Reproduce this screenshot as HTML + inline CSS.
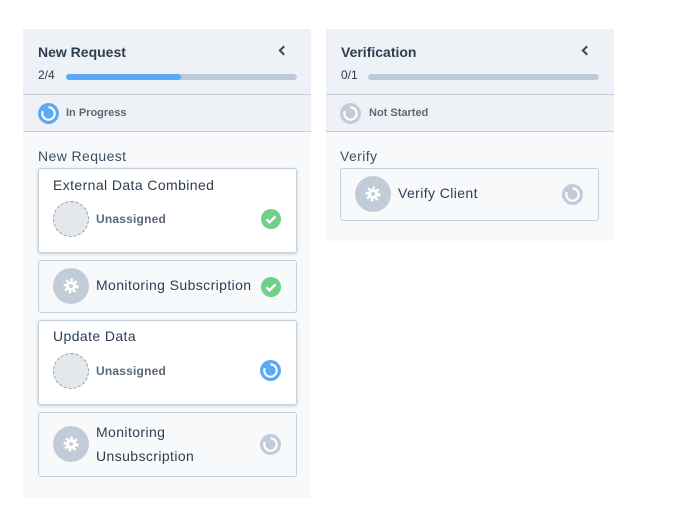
<!DOCTYPE html>
<html><head><style>
*{box-sizing:border-box;margin:0;padding:0}
body{width:673px;height:511px;background:#fff;font-family:"Liberation Sans",sans-serif;color:#2d3e50;position:relative;overflow:hidden}
.col{position:absolute;background:#f7f9fb;width:288px}
.hd{position:absolute;left:0;top:0;width:288px;height:66px;background:#eef2f6;border-bottom:1px solid #c5d0db}
.st{position:absolute;left:0;top:66px;width:288px;height:37px;background:#eef2f6;border-bottom:1px solid #c5d0db}
.a{position:absolute;white-space:nowrap}
.t{font-size:14px;letter-spacing:0.4px}
.card{position:absolute;left:15px;width:259px;border:1px solid #c5d0db;border-radius:3px;background:#f7f9fb}
.card.w{background:#fff;box-shadow:0 1px 3px rgba(0,0,0,.2)}
.av{position:absolute;width:36px;height:36px;border-radius:50%;background:#e4e8ec;border:1.5px dashed #8e9cae}
.gear{position:absolute;width:36px;height:36px;border-radius:50%;background:#c2ccd8}
.chev{position:absolute;left:257px;top:18px;width:7px;height:7px;border-left:2px solid #444;border-bottom:2px solid #444;transform:rotate(45deg)}
</style></head><body>
<svg width="0" height="0" style="position:absolute"><defs>
<symbol id="g" viewBox="0 0 36 36"><circle cx="18" cy="18" r="5.5" fill="none" stroke="#fff" stroke-width="4" stroke-dasharray="2.2 2"/><circle cx="18" cy="18" r="5" fill="#fff"/><circle cx="18" cy="18" r="2" fill="#c2ccd8"/></symbol>
<symbol id="ok" viewBox="0 0 20 20"><circle cx="10" cy="10" r="10" fill="#6fd08a"/><path d="M5.5 10.3l3 3 6-6" fill="none" stroke="#fff" stroke-width="2.4"/></symbol>
<symbol id="pb" viewBox="0 0 22 22"><circle cx="11" cy="11" r="11" fill="#5aa9f5"/><circle cx="11" cy="11" r="6.5" fill="none" stroke="#fff" stroke-width="2.2"/><path d="M11 4.5A6.5 6.5 0 0 0 5 8.5" fill="none" stroke="#5aa9f5" stroke-width="3"/></symbol>
<symbol id="pg" viewBox="0 0 22 22"><circle cx="11" cy="11" r="11" fill="#c2ccd8"/><circle cx="11" cy="11" r="6.5" fill="none" stroke="#fff" stroke-width="2.2"/><path d="M11 4.5A6.5 6.5 0 0 0 5 8.5" fill="none" stroke="#c2ccd8" stroke-width="3"/></symbol>
</defs></svg>

<div class="col" style="left:23px;top:29px;height:469px">
 <div class="hd">
  <div class="a t" style="left:15px;top:15px;font-weight:bold;letter-spacing:0">New Request</div>
  <div class="chev"></div>
  <div class="a" style="left:15px;top:39px;font-size:12px">2/4</div>
  <div class="a" style="left:43px;top:45px;width:231px;height:6px;border-radius:3px;background:#bdcad8"><div style="width:115px;height:6px;border-radius:3px;background:#5aa9f5"></div></div>
 </div>
 <div class="st">
  <svg class="a" style="left:15px;top:8px" width="21" height="21"><use href="#pb"/></svg>
  <div class="a" style="left:43px;top:12px;font-size:11px;font-weight:bold;color:#5a6878">In Progress</div>
 </div>
 <div class="a t" style="left:15px;top:119px;color:#3e4f61">New Request</div>
 <div class="card w" style="top:139px;height:85px">
  <div class="a t" style="left:14px;top:8px">External Data Combined</div>
  <div class="av" style="left:14px;top:32px"></div>
  <div class="a" style="left:57px;top:43px;font-size:12px;font-weight:bold;color:#5a6878;letter-spacing:0.2px">Unassigned</div>
  <svg class="a" style="left:222px;top:40px" width="20" height="20"><use href="#ok"/></svg>
 </div>
 <div class="card" style="top:231px;height:53px">
  <div class="gear" style="left:14px;top:7px"><svg width="36" height="36"><use href="#g"/></svg></div>
  <div class="a t" style="left:57px;top:16px">Monitoring Subscription</div>
  <svg class="a" style="left:222px;top:16px" width="20" height="20"><use href="#ok"/></svg>
 </div>
 <div class="card w" style="top:291px;height:85px">
  <div class="a t" style="left:14px;top:7px">Update Data</div>
  <div class="av" style="left:14px;top:32px"></div>
  <div class="a" style="left:57px;top:43px;font-size:12px;font-weight:bold;color:#5a6878;letter-spacing:0.2px">Unassigned</div>
  <svg class="a" style="left:221px;top:39px" width="21" height="21"><use href="#pb"/></svg>
 </div>
 <div class="card" style="top:383px;height:65px">
  <div class="gear" style="left:14px;top:13px"><svg width="36" height="36"><use href="#g"/></svg></div>
  <div class="a t" style="left:57px;top:7px;line-height:24px">Monitoring<br>Unsubscription</div>
  <svg class="a" style="left:221px;top:21px" width="21" height="21"><use href="#pg"/></svg>
 </div>
</div>

<div class="col" style="left:326px;top:29px;height:212px">
 <div class="hd">
  <div class="a t" style="left:15px;top:15px;font-weight:bold;letter-spacing:0">Verification</div>
  <div class="chev"></div>
  <div class="a" style="left:15px;top:39px;font-size:12px">0/1</div>
  <div class="a" style="left:42px;top:45px;width:231px;height:6px;border-radius:3px;background:#bdcad8"></div>
 </div>
 <div class="st">
  <svg class="a" style="left:14px;top:8px" width="21" height="21"><use href="#pg"/></svg>
  <div class="a" style="left:43px;top:12px;font-size:11px;font-weight:bold;color:#5a6878">Not Started</div>
 </div>
 <div class="a t" style="left:14px;top:119px;color:#3e4f61">Verify</div>
 <div class="card" style="left:14px;top:139px;height:53px">
  <div class="gear" style="left:14px;top:7px"><svg width="36" height="36"><use href="#g"/></svg></div>
  <div class="a t" style="left:57px;top:16px">Verify Client</div>
  <svg class="a" style="left:221px;top:15px" width="21" height="21"><use href="#pg"/></svg>
 </div>
</div>
</body></html>
